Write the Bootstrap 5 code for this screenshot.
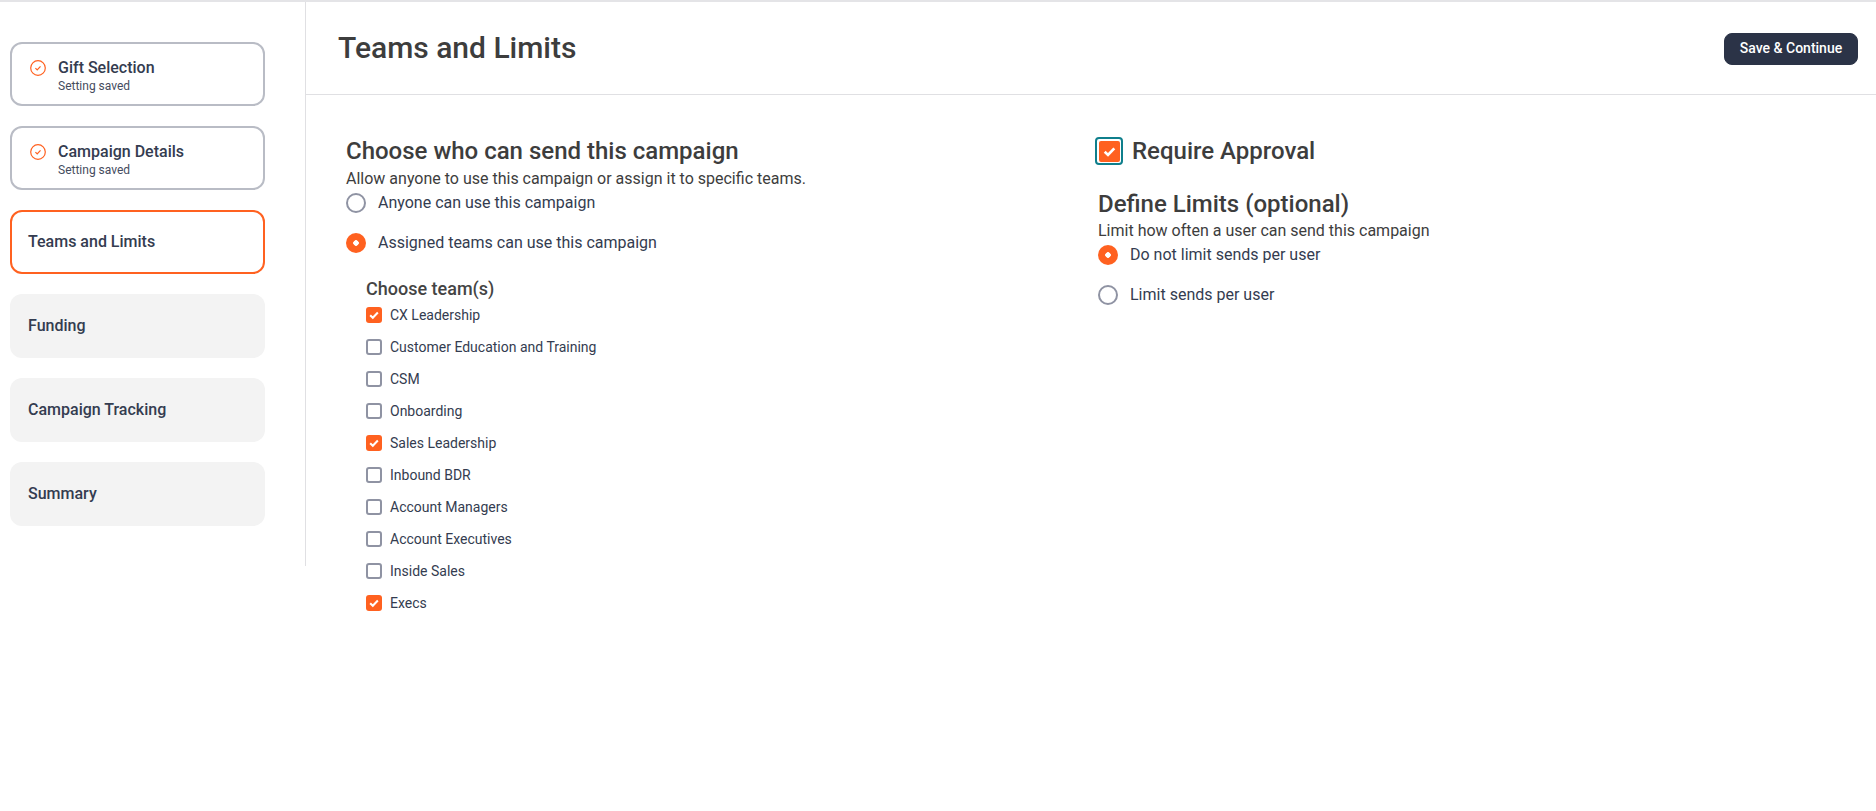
<!DOCTYPE html>
<html lang="en">
<head>
<meta charset="utf-8">
<title>Teams and Limits</title>
<link href="https://cdn.jsdelivr.net/npm/bootstrap@5.3.0/dist/css/bootstrap.min.css" rel="stylesheet">
<style>
body { font-family: Roboto, "Liberation Sans", sans-serif; background: #fff; color: #2b3347; height: 811px; overflow: hidden; }
.page-shell { border-top: 2px solid #e4e4e7; }
.side-rail { width: 306px; height: 564px; border-right: 1px solid #e0e0e3; padding: 40px 0 0 10px; flex: none; gap: 20px; }
.step-box { width: 255px; height: 64px; border-radius: 12px; padding: 0 18px; display: flex; align-items: center; background: #f3f3f3; font-size: 16px; font-weight: 500; color: #343c50; }
.step-now { background: #fff; border: 2px solid #ff6120; padding: 0 16px; }
.step-done { background: #fff; border: 2px solid #b9bcc5; padding: 14px 16px 0; align-items: flex-start; }
.step-name { line-height: 19px; }
.step-sub { font-size: 12px; font-weight: 400; line-height: 15px; color: #454c5e; margin-top: 2px; }
.step-icon { margin: 2px 12px 0 2px; flex: none; }
.top-bar { height: 93px; border-bottom: 1px solid #e0e0e3; padding: 0 18px 0 32px; }
.top-title { font-size: 30px; font-weight: 500; color: #3d3d3d; margin: 0; line-height: 1; }
.save-btn { width: 134px; height: 32px; padding: 0; background: #2b3347; border-color: #2b3347; color: #fff; font-size: 14px; font-weight: 500; border-radius: 8px; margin-top: 1px; }
.save-btn:hover { background: #2b3347; color: #fff; }
.body-cols { padding: 42px 0 0 40px; }
.col-left { width: 752px; flex: none; }
.big-head { font-size: 24px; font-weight: 500; color: #3d3d3d; line-height: 28px; margin: 0; }
.sub-text { font-size: 16px; line-height: 19px; color: #3d3d3d; margin: 4px 0 0; }
.radio-row { display: flex; align-items: center; gap: 12px; font-size: 16px; color: #343c50; height: 20px; margin-top: 5px; }
.radio-row + .radio-row { margin-top: 20px; }
.radio-dot { width: 20px; height: 20px; border-radius: 50%; border: 2px solid #8f93a3; flex: none; background: #fff; }
.radio-on { border: 0; background: radial-gradient(circle, #fff 0 2.5px, #ff6120 3px); }
.team-block { padding-left: 20px; margin-top: 25px; }
.team-head { font-size: 18px; font-weight: 500; color: #444; line-height: 21px; margin: 0; }
.team-row { display: flex; align-items: center; gap: 8px; height: 32px; font-size: 14px; color: #343c50; }
.tick-box { width: 16px; height: 16px; border-radius: 3px; border: 2px solid #8f93a3; background: #fff; flex: none; display: flex; align-items: center; justify-content: center; }
.tick-on { border: 0; background: #ff6120; }
.approve-row { display: flex; align-items: center; gap: 9px; margin-left: -3px; height: 28px; }
.approve-ring { width: 28px; height: 28px; border: 2px solid #0f7f8c; border-radius: 4px; padding: 1.5px; flex: none; }
.approve-ring .tick-box { width: 21px; height: 21px; border-radius: 2px; }
.limits-head { margin-top: 25px; }
.limits-sub { margin-top: 3px; }
</style>
</head>
<body>
<div class="page-shell d-flex">
  <aside class="side-rail d-flex flex-column">
    <div class="step-box step-done">
      <svg class="step-icon" width="16" height="16" viewBox="0 0 16 16" fill="none" stroke="#ff6120"><circle cx="8" cy="8" r="7.3" stroke-width="1.2"/><path d="M5.4 8.2 7.2 10l3.3-3.7" stroke-width="1.2"/></svg>
      <div><div class="step-name">Gift Selection</div><div class="step-sub">Setting saved</div></div>
    </div>
    <div class="step-box step-done">
      <svg class="step-icon" width="16" height="16" viewBox="0 0 16 16" fill="none" stroke="#ff6120"><circle cx="8" cy="8" r="7.3" stroke-width="1.2"/><path d="M5.4 8.2 7.2 10l3.3-3.7" stroke-width="1.2"/></svg>
      <div><div class="step-name">Campaign Details</div><div class="step-sub">Setting saved</div></div>
    </div>
    <div class="step-box step-now">Teams and Limits</div>
    <div class="step-box">Funding</div>
    <div class="step-box">Campaign Tracking</div>
    <div class="step-box">Summary</div>
  </aside>
  <main class="flex-grow-1">
    <div class="top-bar d-flex align-items-center justify-content-between">
      <h1 class="top-title">Teams and Limits</h1>
      <button type="button" class="btn save-btn">Save &amp; Continue</button>
    </div>
    <div class="body-cols d-flex">
      <section class="col-left">
        <h2 class="big-head">Choose who can send this campaign</h2>
        <p class="sub-text">Allow anyone to use this campaign or assign it to specific teams.</p>
        <div class="radio-row"><span class="radio-dot"></span>Anyone can use this campaign</div>
        <div class="radio-row"><span class="radio-dot radio-on"></span>Assigned teams can use this campaign</div>
        <div class="team-block">
          <h3 class="team-head">Choose team(s)</h3>
          <div class="team-row"><span class="tick-box tick-on"><svg width="12" height="12" viewBox="0 0 10 10" fill="none" stroke="#fff" stroke-width="1.7"><path d="M1.8 5.2 4 7.3 8.2 2.9"/></svg></span>CX Leadership</div>
          <div class="team-row"><span class="tick-box"></span>Customer Education and Training</div>
          <div class="team-row"><span class="tick-box"></span>CSM</div>
          <div class="team-row"><span class="tick-box"></span>Onboarding</div>
          <div class="team-row"><span class="tick-box tick-on"><svg width="12" height="12" viewBox="0 0 10 10" fill="none" stroke="#fff" stroke-width="1.7"><path d="M1.8 5.2 4 7.3 8.2 2.9"/></svg></span>Sales Leadership</div>
          <div class="team-row"><span class="tick-box"></span>Inbound BDR</div>
          <div class="team-row"><span class="tick-box"></span>Account Managers</div>
          <div class="team-row"><span class="tick-box"></span>Account Executives</div>
          <div class="team-row"><span class="tick-box"></span>Inside Sales</div>
          <div class="team-row"><span class="tick-box tick-on"><svg width="12" height="12" viewBox="0 0 10 10" fill="none" stroke="#fff" stroke-width="1.7"><path d="M1.8 5.2 4 7.3 8.2 2.9"/></svg></span>Execs</div>
        </div>
      </section>
      <section>
        <div class="approve-row">
          <span class="approve-ring"><span class="tick-box tick-on"><svg width="15" height="15" viewBox="0 0 10 10" fill="none" stroke="#fff" stroke-width="1.8"><path d="M1.8 5.2 4 7.3 8.2 2.9"/></svg></span></span>
          <span class="big-head">Require Approval</span>
        </div>
        <h2 class="big-head limits-head">Define Limits (optional)</h2>
        <p class="sub-text limits-sub">Limit how often a user can send this campaign</p>
        <div class="radio-row"><span class="radio-dot radio-on"></span>Do not limit sends per user</div>
        <div class="radio-row"><span class="radio-dot"></span>Limit sends per user</div>
      </section>
    </div>
  </main>
</div>
</body>
</html>
